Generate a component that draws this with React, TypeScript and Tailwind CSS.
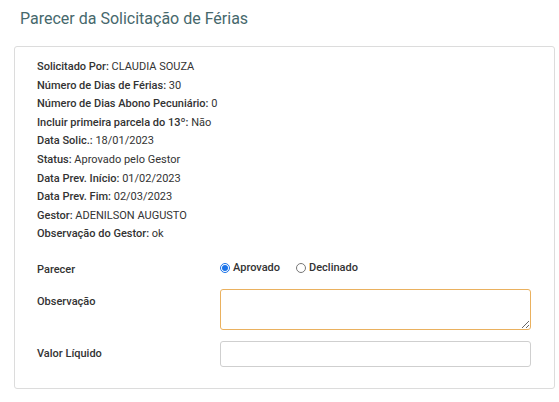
import { useState } from "react";

const info: { label: string; value: string }[] = [
  { label: "Solicitado Por:", value: "CLAUDIA SOUZA" },
  { label: "Número de Dias de Férias:", value: "30" },
  { label: "Número de Dias Abono Pecuniário:", value: "0" },
  { label: "Incluir primeira parcela do 13º:", value: "Não" },
  { label: "Data Solic.:", value: "18/01/2023" },
  { label: "Status:", value: "Aprovado pelo Gestor" },
  { label: "Data Prev. Início:", value: "01/02/2023" },
  { label: "Data Prev. Fim:", value: "02/03/2023" },
  { label: "Gestor:", value: "ADENILSON AUGUSTO" },
  { label: "Observação do Gestor:", value: "ok" },
];

export default function App() {
  const [parecer, setParecer] = useState("aprovado");

  return (
    <div className="w-[559px] h-[402px] bg-white font-['Roboto',sans-serif] text-[#333]">
      <h1 className="pl-[20px] pt-[9px] text-[16px] leading-[20px] text-[#46686c]">
        Parecer da Solicitação de Férias
      </h1>

      <div className="ml-[14px] mr-[4px] mt-[17px] border border-[#dcdcdc] rounded-[3px] pl-[22px] pr-[23px] pt-[11px] pb-[21px]">
        <div className="flex flex-col">
          {info.map((row, i) => (
            <div key={i} className="text-[11px] leading-[18.6px]">
              <span className="font-medium">{row.label}</span> {row.value}
            </div>
          ))}
        </div>

        <div className="mt-[14px] flex items-center h-[20px]">
          <label className="w-[183px] shrink-0 text-[11px] font-medium pt-[4px]">Parecer</label>
          <div className="flex items-center gap-[16px] text-[11px] font-medium">
            <label className="flex items-center gap-[3px]">
              <input
                type="radio"
                name="parecer"
                checked={parecer === "aprovado"}
                onChange={() => setParecer("aprovado")}
                className="m-0 w-[10px] h-[10px] accent-[#1a73e8]"
              />
              Aprovado
            </label>
            <label className="flex items-center gap-[3px]">
              <input
                type="radio"
                name="parecer"
                checked={parecer === "declinado"}
                onChange={() => setParecer("declinado")}
                className="m-0 w-[10px] h-[10px]"
              />
              Declinado
            </label>
          </div>
        </div>

        <div className="mt-[11px] flex">
          <label className="w-[183px] shrink-0 text-[11px] font-medium pt-[5px]">Observação</label>
          <textarea className="w-[311px] shrink-0 h-[41px] border border-[#eab15f] rounded-[3px] outline-none resize-y" />
        </div>

        <div className="mt-[11px] flex items-center">
          <label className="w-[183px] shrink-0 text-[11px] font-medium">Valor Líquido</label>
          <input
            type="text"
            className="w-[311px] shrink-0 h-[26px] border border-[#cfcfcf] rounded-[3px] outline-none"
          />
        </div>
      </div>
    </div>
  );
}
